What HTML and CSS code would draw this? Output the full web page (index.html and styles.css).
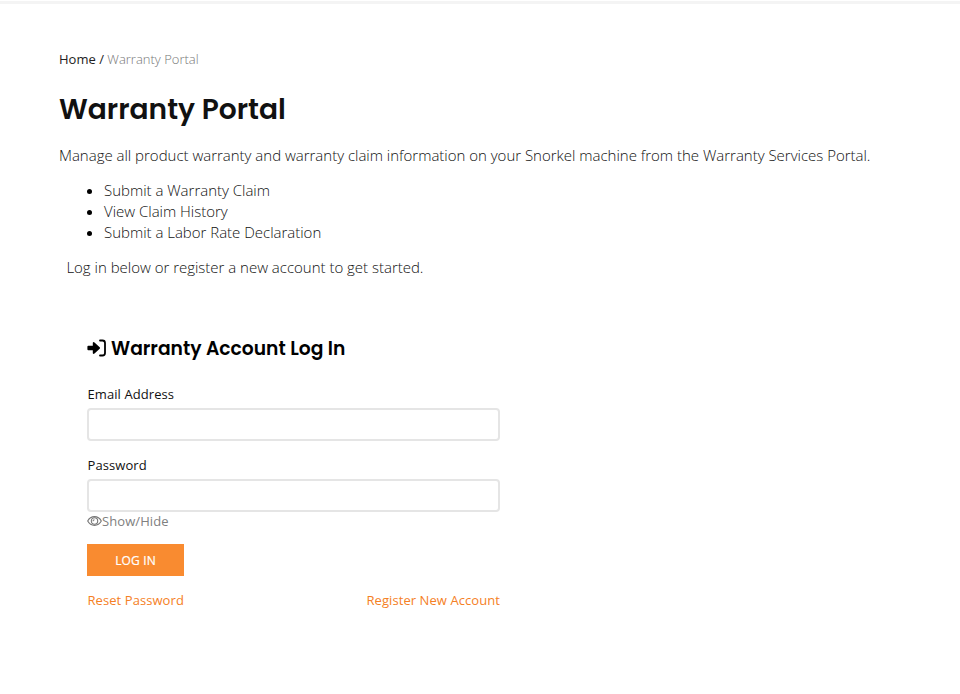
FILE: index.html
```
<!DOCTYPE html>
<html lang="en">
<head>
<meta charset="utf-8">
<title>Warranty Portal</title>
<link rel="stylesheet" href="styles.css">
</head>
<body>
<main class="page">
  <nav class="crumbs"><a class="home">Home</a> <span class="sep">/</span> <span class="current">Warranty Portal</span></nav>
  <h1>Warranty Portal</h1>
  <p class="intro">Manage all product warranty and warranty claim information on your Snorkel machine from the Warranty Services Portal.</p>
  <ul class="features">
    <li><span>Submit a Warranty Claim</span></li>
    <li><span>View Claim History</span></li>
    <li><span>Submit a Labor Rate Declaration</span></li>
  </ul>
  <p class="prompt">Log in below or register a new account to get started.</p>
  <form class="login">
    <h2><svg class="enter" viewBox="0 0 19 18"><path d="M1.300 6.800H5.800V3.700Q6.300 2.600 7.500 3.500L12.700 8.200Q13.500 9 12.700 9.800L7.500 14.500Q6.300 15.400 5.800 14.300V11.200H1.300Q.4 11.200.4 10.300V7.700Q.4 6.800 1.300 6.800z"/><path class="bracket" d="M13 1.500H15.500Q18 1.500 18 4V14Q18 16.500 15.500 16.500H13"/></svg><span>Warranty Account Log In</span></h2>
    <label for="email">Email Address</label>
    <input id="email" type="email">
    <label for="password" class="second">Password</label>
    <input id="password" type="password">
    <div class="toggle"><svg class="eye" viewBox="0 0 15 12"><path d="M.7 6C3.800.2 11.200.2 14.300 6 11.200 11.800 3.800 11.800.7 6z"/><circle cx="7.500" cy="6" r="3.200"/><path d="M6 6.200A1.500 1.500 0 0 1 7.500 4.700"/></svg><span>Show/Hide</span></div>
    <button type="button">LOG IN</button>
    <div class="links"><a class="reset">Reset Password</a><a>Register New Account</a></div>
  </form>
</main>
</body>
</html>
```
FILE: styles.css
```
* { box-sizing: border-box; }
body { margin: 0; background: #fff; color: #000; font-family: "Open Sans", sans-serif; }
.page { height: 693px; margin-top: 1px; padding: 45px 59px 0; border-top: 3px solid #f4f4f4; }
.crumbs { font-size: 13px; line-height: 20px; white-space: nowrap; color: #222; }
.current { color: #777; font-weight: 300; }
h1, h2 { font-family: Poppins, "Open Sans", sans-serif; font-weight: 600; color: #111; margin: 0; white-space: nowrap; }
h1 { font-size: 28.1px; line-height: 40px; margin-top: 20px; }
.intro, .prompt, .features { font-size: 15px; font-weight: 300; letter-spacing: -0.012px; margin: 0; white-space: nowrap; }
.intro, .prompt, .features span { color: #111; }
.intro { line-height: 20px; margin-top: 16px; }
.features { padding-left: 45px; margin-top: 15px; line-height: 20.9px; }
.prompt { line-height: 20px; margin: 14.4px 0 0 7.4px; }
.login { width: 413px; margin: 58px 0 0 28px; }
h2 { font-size: 18.7px; line-height: 28px; display: flex; align-items: center; gap: 5px; color: #000; }
.enter { width: 19px; height: 18px; fill: #000; margin-top: -2px; }
.bracket { fill: none; stroke: #000; stroke-width: 1.8; stroke-linecap: round; }
label { display: block; font-size: 13px; line-height: 18px; color: #111; margin-top: 22px; margin-bottom: 5px; letter-spacing: 0.08px; padding-left: 0.5px; }
.second { margin-top: 15px; }
input { display: block; width: 413px; height: 33px; border: 2px solid #e5e5e5; border-radius: 4px; background: #fff; }
.toggle { display: flex; align-items: center; font-size: 13px; line-height: 18px; color: #808080; letter-spacing: 0.08px; }
.eye { width: 15px; height: 12px; fill: none; stroke: #777; stroke-width: 1.1; }
button { display: block; width: 97px; height: 32px; border: 0; padding: 0; margin-top: 14px; background: #f98b30; color: #fff; font: 12px "Open Sans", sans-serif; letter-spacing: 0.15px; -webkit-text-stroke: 0.2px #fff; }
.links { display: flex; justify-content: space-between; margin-top: 14px; font-size: 13px; line-height: 20px; color: #f58025; letter-spacing: 0.07px; }
.reset { padding-left: 0.5px; }
```
